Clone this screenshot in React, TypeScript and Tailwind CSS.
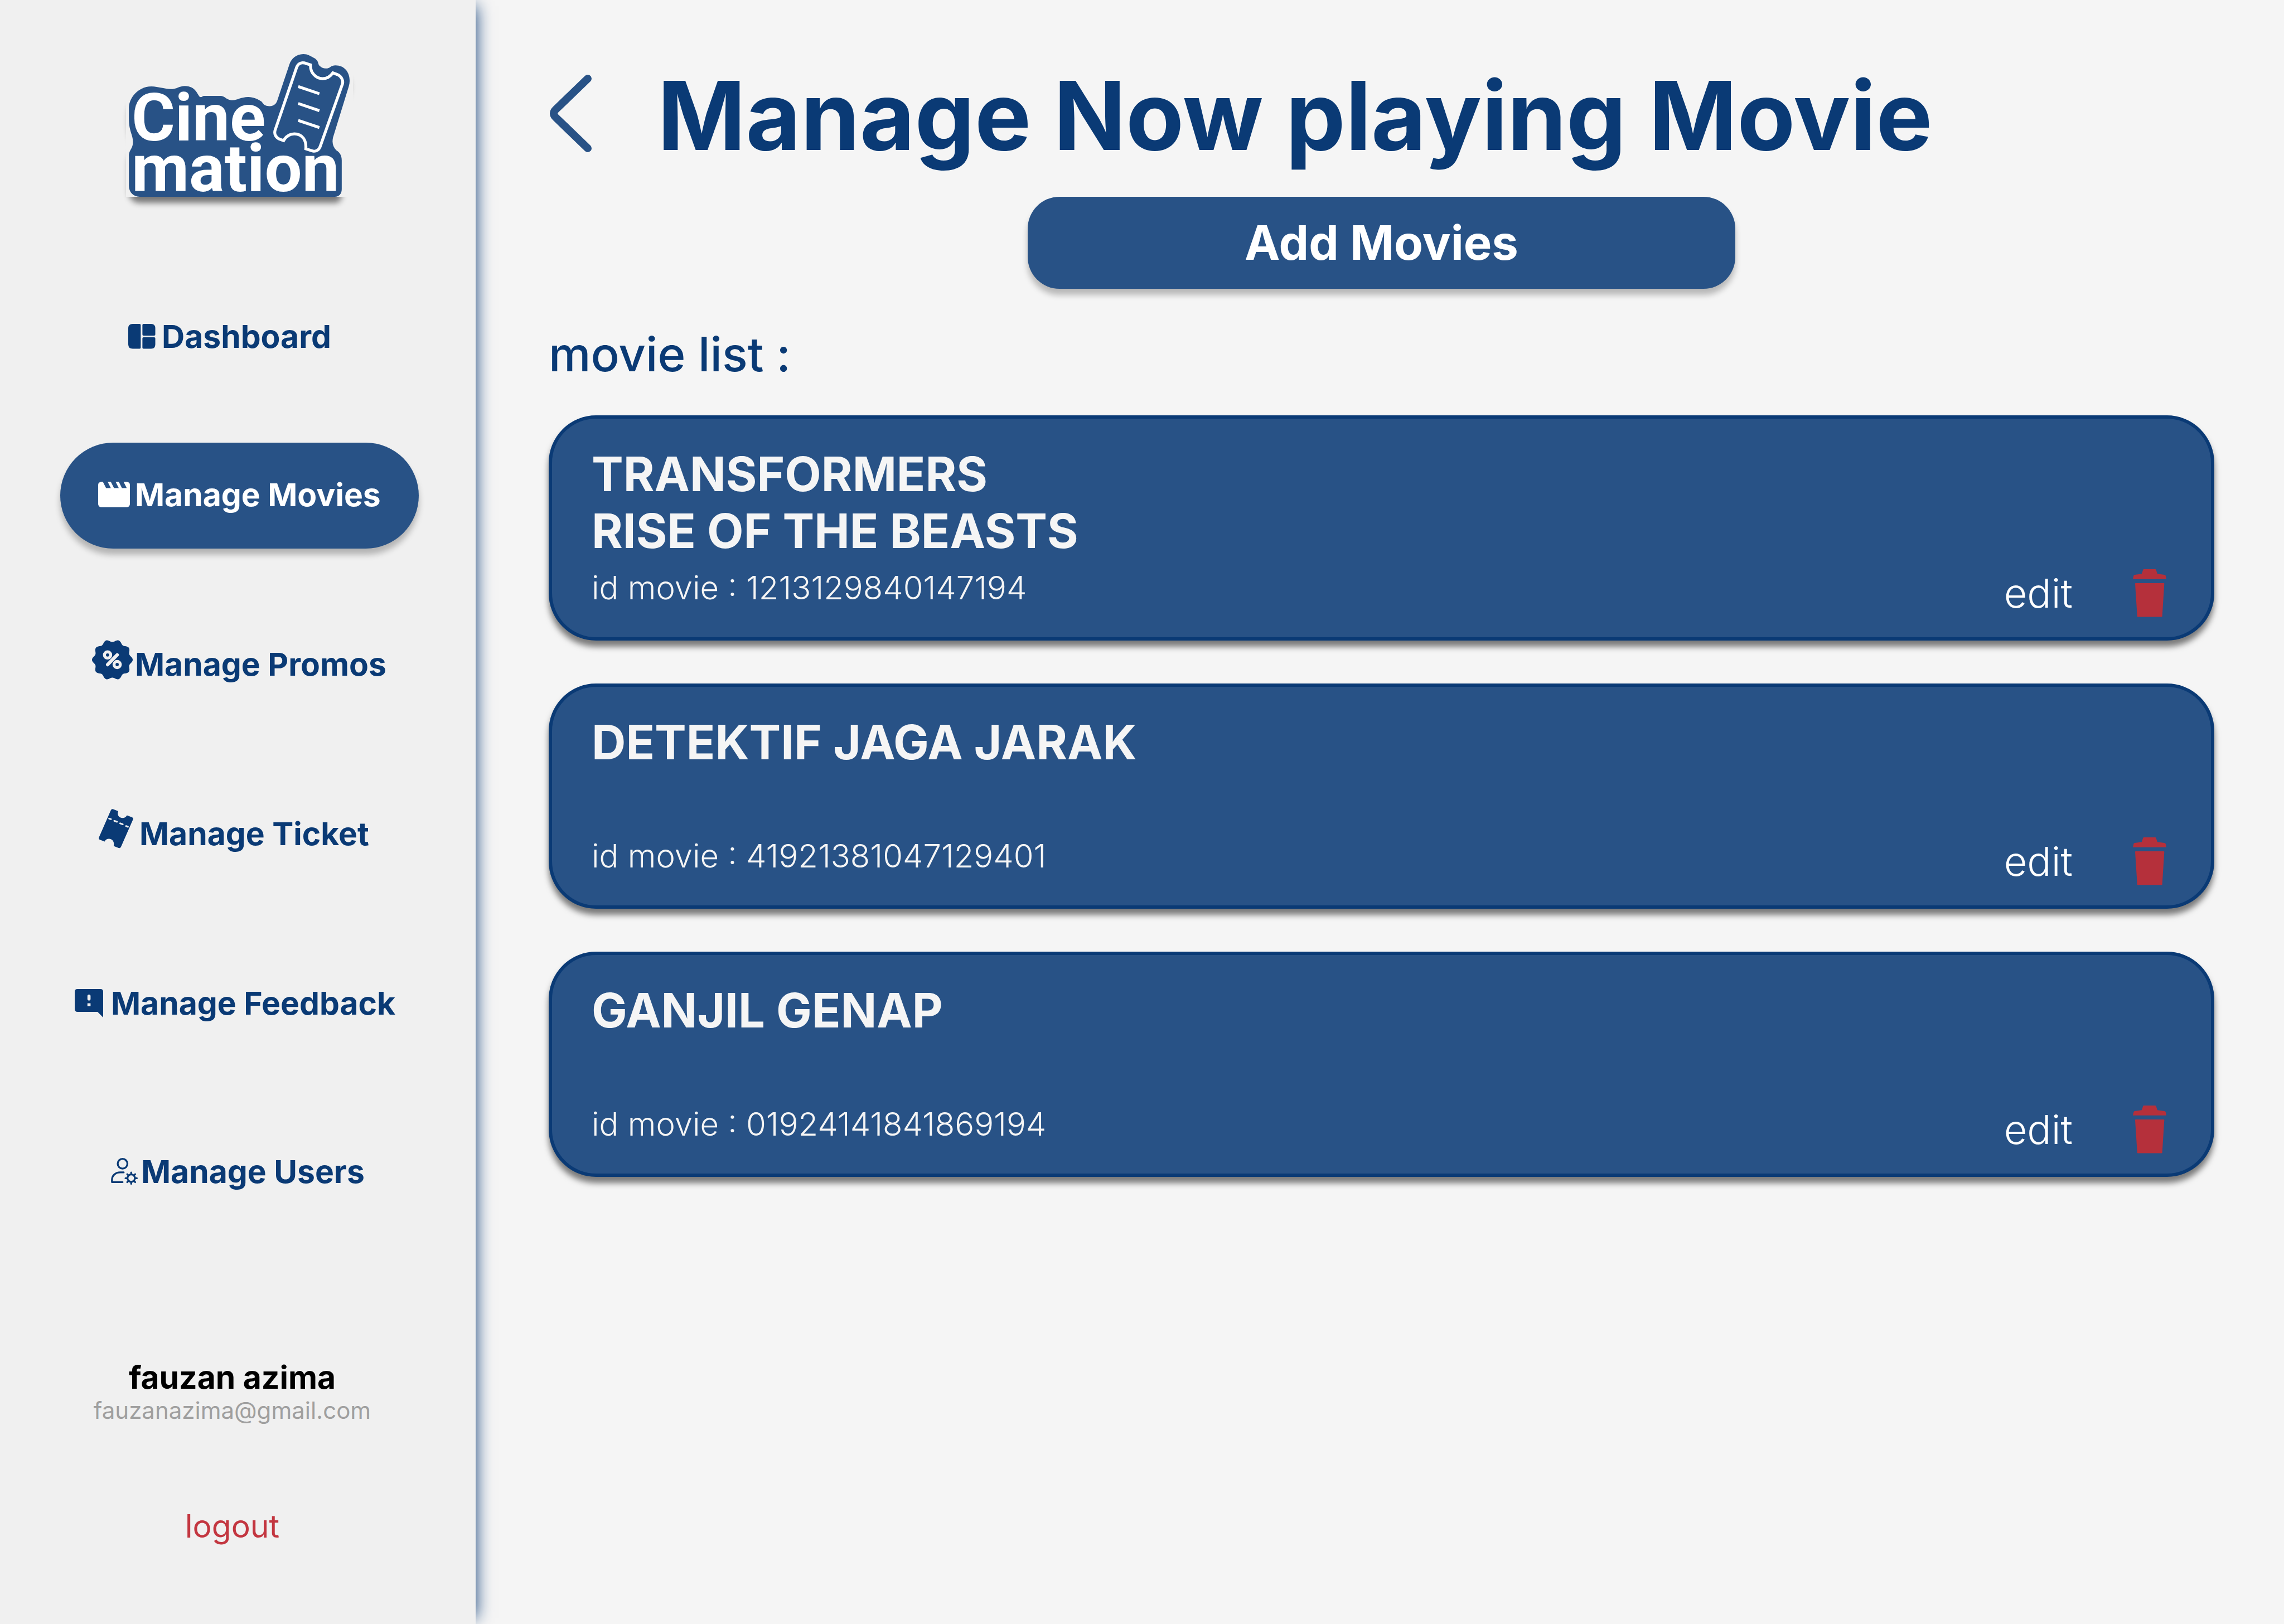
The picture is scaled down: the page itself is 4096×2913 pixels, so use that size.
import type { ReactNode } from "react";

const PAPER = "#f0f0f0";

const LOGO_SHAPE =
  "M106 520C106 430 170 353 245 353C290 355 330 373 362 373C405 373 415 349 452 349C485 349 508 367 522 392L540 427C544 436 557 436 562 428Q565 424 570 424L668 424C705 424 705 457 747 457C775 457 800 433 843 433C875 433 905 450 922 465C938 478 935 502 974 502C1005 502 1018 480 1024 455L1098 185C1108 145 1140 108 1184 108C1212 108 1225 122 1245 134C1285 158 1268 180 1287 200C1297 212 1308 217 1322 217C1352 217 1350 193 1383 193C1435 193 1470 240 1470 310Q1470 330 1464 355L1367 740C1360 780 1367 810 1387 836C1405 850 1421 870 1421 912L1421 1130C1421 1165 1405 1188 1378 1188L172 1188C135 1188 106 1155 106 1105L106 880C106 830 131 830 131 770C131 720 106 690 106 600Z";

function Logo() {
  return (
    <svg className="mx-auto h-[256px] w-[407px] overflow-visible" viewBox="0 0 407 256" role="img" aria-label="Cinemation">
      <defs>
        <filter id="logo-shadow" x="-10%" y="-10%" width="120%" height="125%">
          <feGaussianBlur stdDeviation="5.5" />
        </filter>
      </defs>
      <g filter="url(#logo-shadow)" opacity="0.5">
        <path d={LOGO_SHAPE} transform="translate(-25.6 -14.6) scale(.29025 .23704)" />
      </g>
      <rect width="407" height="256" fill={PAPER} />
      <g transform="translate(-25.6 -25.6) scale(.29025 .23704)">
        <path d={LOGO_SHAPE} fill="#285286" />
        <g fill="none" stroke="#fff" strokeWidth="5.2">
          <path
            vectorEffect="non-scaling-stroke"
            d="M1142 210C1150 180 1170 170 1190 175L1228 190C1226 250 1262 294 1302 294C1330 294 1352 275 1366 250L1392 262C1420 275 1432 310 1425 335L1290 800C1282 835 1262 848 1240 841L1199 825C1204 760 1178 712 1128 712C1098 712 1075 735 1062 763L1035 751C1012 738 1003 710 1009 685Z"
          />
          <path vectorEffect="non-scaling-stroke" d="M1152 354L1283 408M1152 482L1283 536M1152 610L1283 664" />
        </g>
      </g>
      <g fill="#fff" className="font-['Roboto',sans-serif] text-[119px] font-bold">
        <text x="10" y="155">Cine</text>
        <text x="10" y="246">mation</text>
      </g>
    </svg>
  );
}

function DashboardIcon() {
  return (
    <svg className="mr-[11px] h-[45px] w-[49px]" viewBox="0 0 49 45" fill="currentColor" aria-hidden="true">
      <path d="M8 0H20.4Q22.4 0 22.4 2V42.5Q22.4 44.5 20.4 44.5H8Q0 44.5 0 36.5V8Q0 0 8 0Z" />
      <path d="M27.4 0H41Q48.5 0 48.5 8V19Q48.5 21 46.5 21H27.4Q25.4 21 25.4 19V2Q25.4 0 27.4 0Z" />
      <path d="M27.4 24H46.5Q48.5 24 48.5 26V36.5Q48.5 44.5 41 44.5H27.4Q25.4 44.5 25.4 42.5V26Q25.4 24 27.4 24Z" />
    </svg>
  );
}

function MoviesIcon() {
  return (
    <svg className="mr-[9px] h-[46px] w-[57px]" viewBox="2 4 20 16" fill="currentColor" aria-hidden="true">
      <path d="M18 4l2 4h-3l-2-4h-2l2 4h-3l-2-4H8l2 4H7L5 4H4a2 2 0 0 0-2 2v12a2 2 0 0 0 2 2h16a2 2 0 0 0 2-2V6a2 2 0 0 0-2-2z" />
    </svg>
  );
}

/* Badge outline: a circle whose radius swells ten times per turn. */
const BADGE =
  "M" +
  Array.from({ length: 240 }, (_, i) => {
    const a = (i / 240) * 2 * Math.PI;
    const r = 34.2 + 2.3 * Math.cos(10 * a);
    return `${(r * Math.cos(a)).toFixed(2)} ${(r * Math.sin(a)).toFixed(2)}`;
  }).join("L") +
  "Z";

function PromosIcon() {
  return (
    <svg className="mr-[4px] h-[86px] w-[73px]" viewBox="-36.5 -35.5 73 86" aria-hidden="true">
      <path d={BADGE} fill="currentColor" />
      <g fill="none" stroke={PAPER} strokeLinecap="round">
        <circle cx="-8.6" cy="-8.7" r="5.6" strokeWidth="5.4" />
        <circle cx="8.6" cy="8.5" r="5.6" strokeWidth="5.4" />
        <path d="M8.7 -8.8L-8.5 8.7" strokeWidth="6" />
      </g>
    </svg>
  );
}

function TicketIcon() {
  return (
    <svg className="mr-[11px] h-[88px] w-[62px]" viewBox="0 0 62 88" aria-hidden="true">
      <path
        fill="currentColor"
        d="M25.5 .3L35 4C32.5 11 36.5 16.3 42.7 16.3C46.5 16.3 49 14.5 50.7 11.4L59.8 14.9Q62.7 16 61.5 19L40.2 67.5Q38.7 71 35.6 70.1L26.8 66.5C28.8 59 24 53.6 18.5 53.6C15 53.6 12 55.5 10.9 58.5L2 55.2Q-.7 54 .5 51L21.7 2.5Q23 -.5 25.5 .3Z"
      />
      <path
        d="M18.7 17.3L22 18.4M28 21.3L32.8 23M38.5 25.9L43.2 27.6M49 30.7L52.4 32"
        stroke={PAPER}
        strokeWidth="3"
        strokeLinecap="round"
      />
    </svg>
  );
}

function FeedbackIcon() {
  return (
    <svg className="mr-[14px] h-[51px] w-[51px]" viewBox="0 0 51 51" aria-hidden="true">
      <path fill="currentColor" d="M5 0H46Q51 0 51 5V51L41 41H5Q0 41 0 36V5Q0 0 5 0Z" />
      <rect x="22.8" y="10" width="5.6" height="10.6" rx="2.8" fill={PAPER} />
      <rect x="22.8" y="25.6" width="5.6" height="5.4" fill={PAPER} />
    </svg>
  );
}

function UsersIcon() {
  return (
    <svg
      className="mr-[5px] h-[49px] w-[49px]"
      viewBox="0 0 49 49"
      fill="none"
      stroke="currentColor"
      strokeWidth="3.3"
      strokeLinecap="round"
      strokeLinejoin="round"
      aria-hidden="true"
    >
      <circle cx="20.8" cy="10.4" r="8.7" />
      <path d="M22.8 25.9H16.5C8 25.9 1.8 31.5 1.8 39.5V43.3H20.8" />
      <circle cx="36.3" cy="36.3" r="6.7" />
      {[0, 45, 90, 135, 180, 225, 270, 315].map((a) => (
        <path key={a} d="M36.3 28V26.2" transform={`rotate(${a} 36.3 36.3)`} />
      ))}
    </svg>
  );
}

function TrashIcon() {
  return (
    <svg className="h-[86px] w-[60px]" viewBox="0 0 60 86" fill="#b5303b" aria-hidden="true">
      <path d="M0 17.8L1.4 11.5Q1.8 10.5 3.5 10.1L15.9 8.3L18.2 1.2Q18.5 0 19.7 0H40Q41.2 0 41.6 1.2L43.9 8.3L56.5 10Q58.2 10.3 58.7 11.5L60 17.8Z" />
      <path d="M5 25H55.3Q56.4 25 56.3 26.2L52.6 84.4Q52.5 85.5 51.4 85.5H9Q7.9 85.5 7.8 84.4L4 26.2Q3.9 25 5 25Z" />
    </svg>
  );
}

type NavItem = { label: string; icon: ReactNode; className: string };

const NAV: NavItem[] = [
  { label: "Dashboard", icon: <DashboardIcon />, className: "mb-[94px] pl-[122px]" },
  {
    label: "Manage Movies",
    icon: <MoviesIcon />,
    className: "mb-[114px] bg-[#285286] pl-[68px] text-white shadow-[0_11px_11px_rgba(0,0,0,0.25)]",
  },
  { label: "Manage Promos", icon: <PromosIcon />, className: "mb-[114px] pl-[57px]" },
  { label: "Manage Ticket", icon: <TicketIcon />, className: "mb-[114px] pl-[69px]" },
  { label: "Manage Feedback", icon: <FeedbackIcon />, className: "mb-[112px] pl-[26px]" },
  { label: "Manage Users", icon: <UsersIcon />, className: "pl-[91px]" },
];

const MOVIES = [
  { title: ["TRANSFORMERS", "RISE OF THE BEASTS"], id: "1213129840147194" },
  { title: ["DETEKTIF JAGA JARAK"], id: "41921381047129401" },
  { title: ["GANJIL GENAP"], id: "01924141841869194" },
];

function Sidebar() {
  return (
    <aside className="relative z-10 w-[853px] shrink-0 bg-[#f0f0f0] pt-[97px] pr-[102px] pl-[108px] shadow-[11px_0_28px_-11px_#0a3a75]">
      <Logo />
      <nav className="mt-[157px] flex flex-col text-[57px] leading-[69px] font-bold text-[#0a3a75]">
        {NAV.map((item) => (
          <a
            key={item.label}
            href="#"
            className={`flex h-[190px] items-center rounded-full pb-[4px] whitespace-nowrap ${item.className}`}
          >
            {item.icon}
            {item.label}
          </a>
        ))}
      </nav>
      <div className="mt-[239px] flex flex-col items-center pr-[26px]">
        <p className="text-[57px] leading-[67px] font-bold text-black">fauzan azima</p>
        <p className="text-[42px] leading-[52px] text-[#9f9f9f]">fauzanazima@gmail.com</p>
        <button type="button" className="mt-[147px] text-[57px] leading-[69px] text-[#c33640]">
          logout
        </button>
      </div>
    </aside>
  );
}

function MovieCard({ title, id }: { title: string[]; id: string }) {
  return (
    <li className="flex justify-between rounded-[85px] border-[6px] border-[#0a3a75] bg-[#285286] pt-[49px] pr-[80px] pl-[71px] text-[#f5f5f5] shadow-[0_11px_11px_rgba(0,0,0,0.5)]">
      <div className="pb-[54px]">
        <h2 className="min-h-[204px] text-[85px] leading-[102px] font-bold">
          {title.map((line) => (
            <span key={line} className="block">
              {line}
            </span>
          ))}
        </h2>
        <p className="mt-[15px] text-[58px] leading-[70px] font-light">id movie : {id}</p>
      </div>
      <div className="flex items-center gap-[108px] self-end pb-[36px]">
        <button type="button" className="text-[72px] leading-[87px] font-light text-white">
          edit
        </button>
        <button type="button" aria-label="Delete movie">
          <TrashIcon />
        </button>
      </div>
    </li>
  );
}

export default function App() {
  return (
    <div className="flex min-h-screen bg-[#f5f5f5] font-['Inter',sans-serif]">
      <Sidebar />
      <main className="flex-1 pt-[104px] pr-[125px] pl-[131px]">
        <header className="flex items-center gap-[118px]">
          <button type="button" aria-label="Back" className="pb-[8px]">
            <svg
              className="h-[139px] w-[77px]"
              viewBox="0 0 77 139"
              fill="none"
              stroke="#285286"
              strokeWidth="14"
              strokeLinecap="round"
              aria-hidden="true"
            >
              <path d="M70 7L13 62Q5 69.5 13 77L70 132" />
            </svg>
          </button>
          <h1 className="text-[170px] leading-[207px] font-bold whitespace-nowrap text-[#0a3a75]">
            Manage Now playing Movie
          </h1>
        </header>
        <button
          type="button"
          className="mx-auto mt-[42px] block h-[165px] w-[1269px] rounded-[57px] bg-[#285286] text-[85px] leading-[103px] font-bold text-white shadow-[0_11px_11px_rgba(0,0,0,0.25)]"
        >
          Add Movies
        </button>
        <p className="mt-[66px] text-[85px] leading-[103px] font-medium text-[#0a3a75]">movie list :</p>
        <ul className="mt-[58px] flex flex-col gap-[77px]">
          {MOVIES.map((m) => (
            <MovieCard key={m.id} title={m.title} id={m.id} />
          ))}
        </ul>
      </main>
    </div>
  );
}
